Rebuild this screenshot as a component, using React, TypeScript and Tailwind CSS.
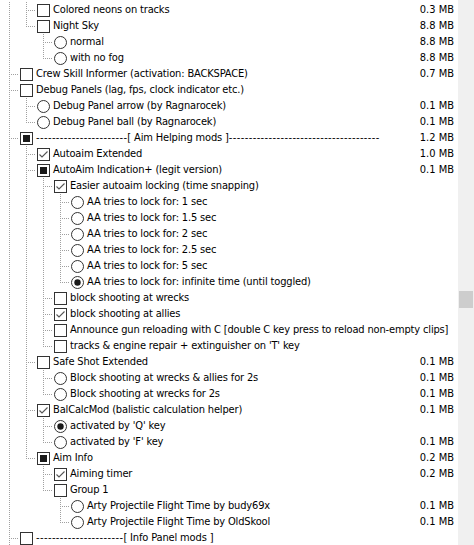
import React from "react";

type Item = {
  l: number;
  t: "c" | "r";
  s?: 0 | 1 | 2;
  text: React.ReactNode;
  size?: string;
};

const D = ({ n }: { n: number }) => (
  <span className="tracking-[0.4px]">{"-".repeat(n)}</span>
);

const items: Item[] = [
  { l: 1, t: "c", text: "Colored neons on tracks", size: "0.3 MB" },
  { l: 1, t: "c", text: "Night Sky", size: "8.8 MB" },
  { l: 2, t: "r", text: "normal", size: "8.8 MB" },
  { l: 2, t: "r", text: "with no fog", size: "8.8 MB" },
  { l: 0, t: "c", text: "Crew Skill Informer (activation: BACKSPACE)", size: "0.7 MB" },
  { l: 0, t: "c", text: "Debug Panels (lag, fps, clock indicator etc.)" },
  { l: 1, t: "r", text: "Debug Panel arrow (by Ragnarocek)", size: "0.1 MB" },
  { l: 1, t: "r", text: "Debug Panel ball (by Ragnarocek)", size: "0.1 MB" },
  {
    l: 0,
    t: "c",
    s: 2,
    text: (
      <>
        <D n={23} />
        [ Aim Helping mods ]
        <D n={38} />
      </>
    ),
    size: "1.2 MB",
  },
  { l: 1, t: "c", s: 1, text: "Autoaim Extended", size: "1.0 MB" },
  { l: 1, t: "c", s: 2, text: "AutoAim Indication+ (legit version)", size: "0.1 MB" },
  { l: 2, t: "c", s: 1, text: "Easier autoaim locking (time snapping)" },
  { l: 3, t: "r", text: "AA tries to lock for: 1 sec" },
  { l: 3, t: "r", text: "AA tries to lock for: 1.5 sec" },
  { l: 3, t: "r", text: "AA tries to lock for: 2 sec" },
  { l: 3, t: "r", text: "AA tries to lock for: 2.5 sec" },
  { l: 3, t: "r", text: "AA tries to lock for: 5 sec" },
  { l: 3, t: "r", s: 1, text: "AA tries to lock for: infinite time (until toggled)" },
  { l: 2, t: "c", text: "block shooting at wrecks" },
  { l: 2, t: "c", s: 1, text: "block shooting at allies" },
  { l: 2, t: "c", text: "Announce gun reloading with C [double C key press to reload non-empty clips]" },
  { l: 2, t: "c", text: "tracks & engine repair + extinguisher on 'T' key" },
  { l: 1, t: "c", text: "Safe Shot Extended", size: "0.1 MB" },
  { l: 2, t: "r", text: "Block shooting at wrecks & allies for 2s", size: "0.1 MB" },
  { l: 2, t: "r", text: "Block shooting at wrecks for 2s", size: "0.1 MB" },
  { l: 1, t: "c", s: 1, text: "BalCalcMod (balistic calculation helper)", size: "0.1 MB" },
  { l: 2, t: "r", s: 1, text: "activated by 'Q' key" },
  { l: 2, t: "r", text: "activated by 'F' key", size: "0.1 MB" },
  { l: 1, t: "c", s: 2, text: "Aim Info", size: "0.2 MB" },
  { l: 2, t: "c", s: 1, text: "Aiming timer", size: "0.2 MB" },
  { l: 2, t: "c", text: "Group 1" },
  { l: 3, t: "r", text: "Arty Projectile Flight Time by budy69x", size: "0.1 MB" },
  { l: 3, t: "r", text: "Arty Projectile Flight Time by OldSkool", size: "0.1 MB" },
  {
    l: 0,
    t: "c",
    text: (
      <>
        <D n={22} />
        [ Info Panel mods ]
      </>
    ),
  },
];

// sentinel: more root-level items continue below the visible area
const levels = [...items.map((i) => i.l), 0];

function hasNext(i: number, k: number) {
  for (let j = i + 1; j < levels.length; j++) {
    if (levels[j] < k) return false;
    if (levels[j] === k) return true;
  }
  return false;
}

const LINE = "#a0a0a0";

function Guide({ on }: { on: boolean }) {
  return (
    <svg width="17" height="16" className="shrink-0 block">
      {on && (
        <line x1="9.5" y1="0" x2="9.5" y2="16" stroke={LINE} strokeWidth="1" strokeDasharray="1 1" />
      )}
    </svg>
  );
}

function Connector({ last }: { last: boolean }) {
  return (
    <svg width="19" height="16" className="shrink-0 block">
      <line x1="9.5" y1="0" x2="9.5" y2={last ? 9 : 16} stroke={LINE} strokeWidth="1" strokeDasharray="1 1" />
      <line x1="11" y1="8.5" x2="19" y2="8.5" stroke={LINE} strokeWidth="1" strokeDasharray="1 1" />
    </svg>
  );
}

function Check({ s }: { s: number }) {
  return (
    <svg width="13" height="13" className="ml-[1px] shrink-0 block">
      <rect x="0.5" y="0.5" width="12" height="12" fill="#fff" stroke="#333" strokeWidth="1" />
      {s === 1 && (
        <polyline points="2.5,6.5 5,9 10.5,3.5" fill="none" stroke="#555" strokeWidth="1.1" />
      )}
      {s === 2 && <rect x="3" y="3" width="7" height="7" fill="#1a1a1a" />}
    </svg>
  );
}

function Radio({ s }: { s: number }) {
  return (
    <svg width="13" height="13" className="ml-[1px] shrink-0 block">
      <circle cx="6.5" cy="6.5" r="6" fill="#fff" stroke="#333" strokeWidth="1" />
      {s === 1 && <circle cx="6.5" cy="6.5" r="3.2" fill="#1a1a1a" />}
    </svg>
  );
}

export default function App() {
  return (
    <div className="flex h-[545px] w-[474px] overflow-hidden bg-white text-[11px] leading-4 text-black font-[family-name:DejaVu_Sans_Condensed,Liberation_Sans,sans-serif]">
      <div className="flex min-w-0 flex-1 flex-col pt-[2px]">
        {items.map((it, i) => (
          <div key={i} className="flex h-4 shrink-0 items-center">
            {Array.from({ length: it.l }).map((_, k) => (
              <Guide key={k} on={hasNext(i, k)} />
            ))}
            <Connector last={!hasNext(i, it.l)} />
            {it.t === "c" ? <Check s={it.s ?? 0} /> : <Radio s={it.s ?? 0} />}
            <span className="ml-[3px] whitespace-nowrap tracking-[-0.15px]">{it.text}</span>
            <span className="ml-auto shrink-0 whitespace-nowrap pl-2 pr-[4px]">{it.size}</span>
          </div>
        ))}
      </div>
      <div className="w-4 shrink-0 bg-[#f0f0f0] pt-[291px]">
        <div className="mx-[1px] h-[17px] bg-[#cdcdcd]" />
      </div>
    </div>
  );
}
